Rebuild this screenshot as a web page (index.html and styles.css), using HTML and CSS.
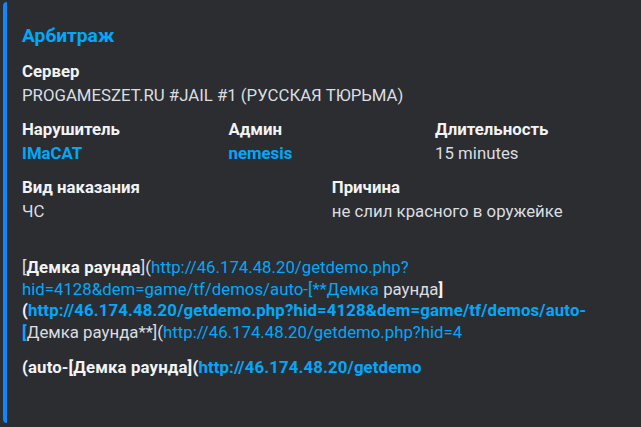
FILE: index.html
```html
<!DOCTYPE html>
<html lang="ru">
<head>
    <meta charset="UTF-8">
    <meta name="viewport" content="width=device-width, initial-scale=1.0">
    <title>Арбитраж</title>
    <link rel="stylesheet" href="styles.css">
</head>
<body>
    <div class="embed">
        <div class="embed-title">Арбитраж</div>

        <div class="fields">
            <div class="field full">
                <div class="field-name">Сервер</div>
                <div class="field-value">PROGAMESZET.RU #JAIL #1 (РУССКАЯ ТЮРЬМА)</div>
            </div>
            <div class="field third">
                <div class="field-name">Нарушитель</div>
                <div class="field-value"><a class="mention" href="#">IMaCAT</a></div>
            </div>
            <div class="field third">
                <div class="field-name">Админ</div>
                <div class="field-value"><a class="mention" href="#">nemesis</a></div>
            </div>
            <div class="field third">
                <div class="field-name">Длительность</div>
                <div class="field-value">15 minutes</div>
            </div>
            <div class="field half">
                <div class="field-name">Вид наказания</div>
                <div class="field-value">ЧС</div>
            </div>
            <div class="field half">
                <div class="field-name">Причина</div>
                <div class="field-value">не слил красного в оружейке</div>
            </div>
        </div>

        <!-- ссылка на демку, разметка поломалась как в оригинале -->
        <div class="desc">
            [<b>Демка раунда</b>](<a href="#">http://46.174.48.20/getdemo.php?</a><br>
            <a href="#">hid=4128&amp;dem=game/tf/demos/auto-[**Демка</a> раунда<b>]</b><br>
            <b>(<a href="#">http://46.174.48.20/getdemo.php?hid=4128&amp;dem=game/tf/demos/auto-</a></b><br>
            <b><a href="#">[</a></b>Демка раунда**](<a href="#">http://46.174.48.20/getdemo.php?hid=4</a>
        </div>
        <div class="desc desc-last">
            <b>(auto-[Демка раунда](<a href="#">http://46.174.48.20/getdemo</a></b>
        </div>
    </div>
</body>
</html>
```
FILE: styles.css
```css
* {
    margin: 0;
    padding: 0;
    box-sizing: border-box;
}
body {
    background: #2b2d31;
    color: #dbdee1;
    font-family: Roboto, 'Noto Sans', sans-serif;
    font-size: 16.8px;
    overflow: hidden;
}
.embed {
    box-sizing: content-box;
    width: 610px;
    margin: 2px 0 0 3px;
    padding: 11px 19px 44px 15px;
    background: #2b2d31;
    border-left: 4px solid #0f87ff;
    border-radius: 4px;
}
.embed-title {
    margin-top: 10px;
    font-size: 19.2px;
    font-weight: 700;
    line-height: 26px;
    color: #00a8fc;
}
.fields {
    display: grid;
    grid-template-columns: repeat(12, 1fr);
    column-gap: 9.6px;
    row-gap: 12px;
    margin-top: 11px;
}
.field {
    line-height: 22px;
    min-width: 0;
}
.full {
    grid-column: span 12;
}
.third {
    grid-column: span 4;
}
.half {
    grid-column: span 6;
}
.field-name {
    font-weight: 700;
    color: #f2f3f5;
    margin-bottom: 2px;
}
.field-value {
    color: #dbdee1;
}
a {
    color: #00a8fc;
    text-decoration: none;
}
.mention {
    font-weight: 700;
}
.desc {
    margin-top: 35px;
    line-height: 21.6px;
    white-space: nowrap;
}
.desc b {
    color: #f2f3f5;
    letter-spacing: 0.13px;
}
.desc b a {
    color: #00a8fc;
}
.desc-last {
    margin-top: 13.6px;
}
```
